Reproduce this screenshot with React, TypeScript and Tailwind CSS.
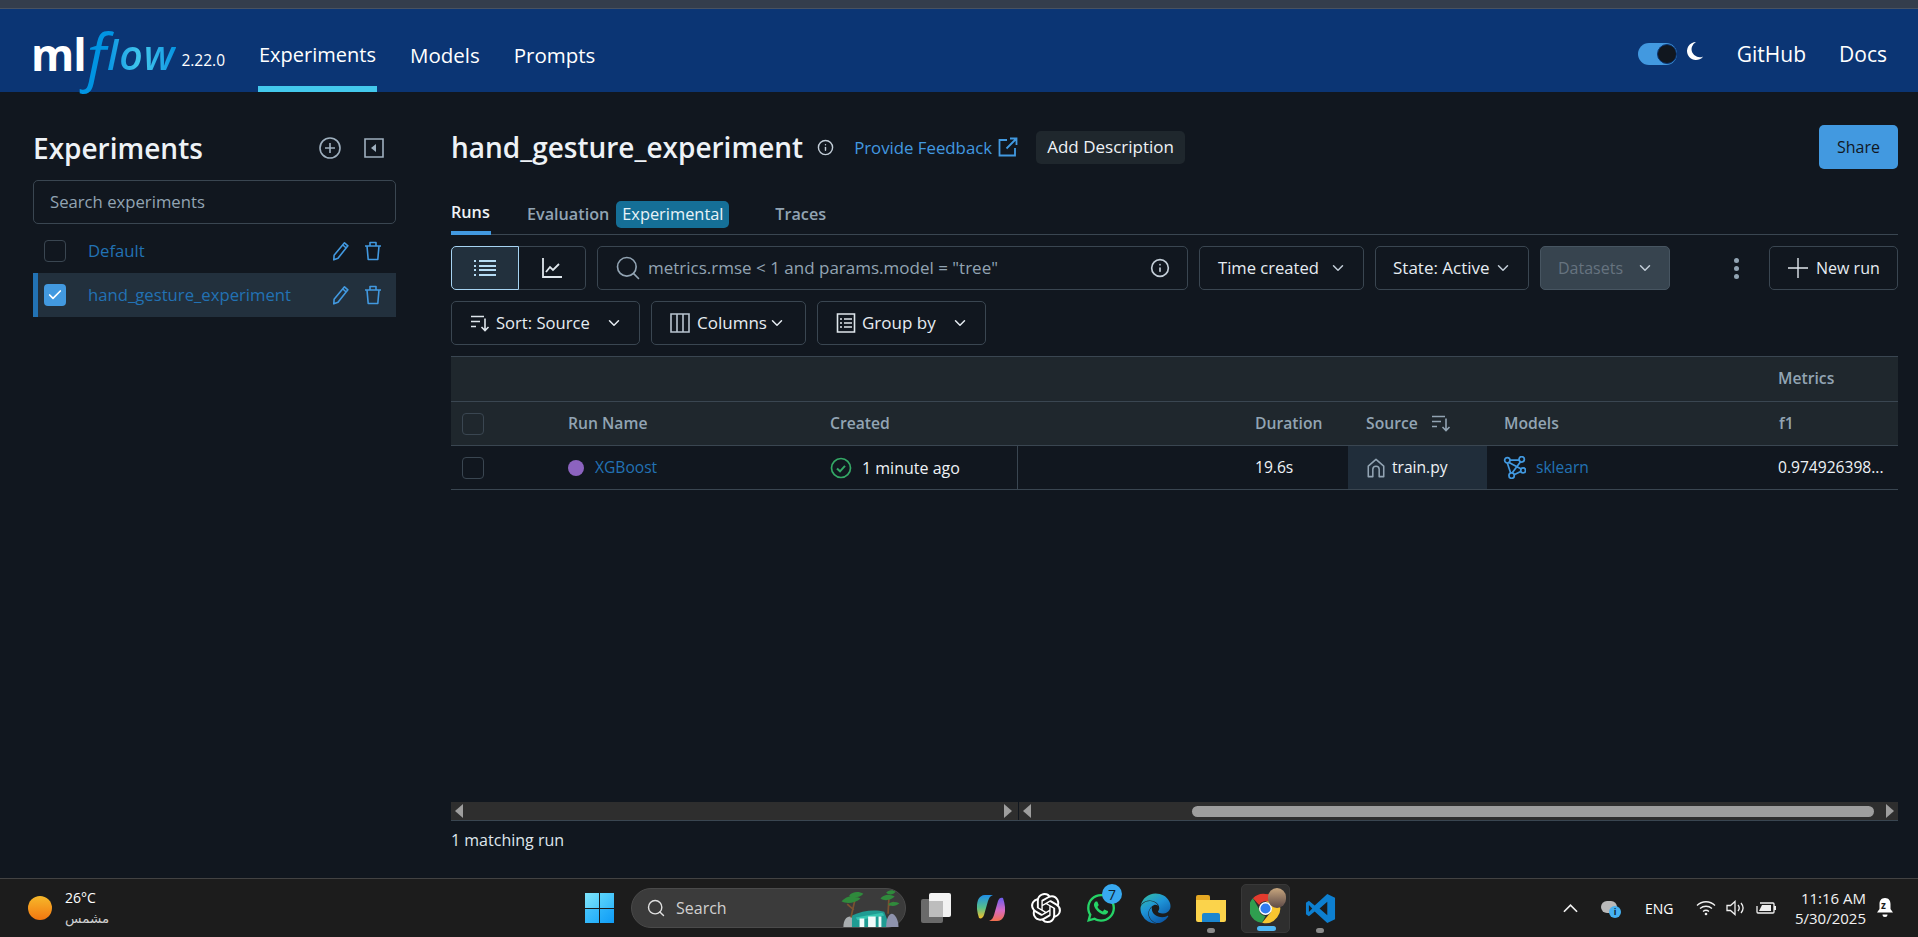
import { Check, ChevronDown, Info, Search } from 'lucide-react';
import { SiOpenai } from 'react-icons/si';
import { FaWhatsapp, FaEdge } from 'react-icons/fa';

const tableCols = 'grid grid-cols-[117px_262px_188px_237px_93px_139px_275px_136px]';
const outlineBtn = 'h-[44px] flex items-center border border-[#3a4651] rounded-[5px] text-[#e6ecf2]';

const SortIcon = ({ className }: { className?: string }) => (
    <svg viewBox="0 0 20 20" className={className} fill="none" stroke="currentColor" strokeWidth="1.6">
        <path d="M1 3.5h13M1 8.5h9M1 13.5h5M15 5.5v12M11.5 14l3.5 3.5 3.5-3.5" />
    </svg>
);

const PencilIcon = () => (
    <svg viewBox="0 0 18 20" className="w-[18px] h-[20px] text-[#4299e0]" fill="none" stroke="currentColor" strokeWidth="1.6" strokeLinejoin="round">
        <path d="M12.5 1.8l3.4 3L6 17.2l-4.2 1.6.3-4.5zM10.8 4l3.4 3" />
    </svg>
);

const TrashIcon = () => (
    <svg viewBox="0 0 18 20" className="w-[18px] h-[20px] text-[#4299e0]" fill="none" stroke="currentColor" strokeWidth="1.6" strokeLinejoin="round">
        <path d="M1 5h16M6 5V1.5h6V5M3 5l1.2 13.5h9.6L15 5" />
    </svg>
);

const Toggle = () => (
    <div className="w-[39px] h-[22px] rounded-full bg-[#4299e0] flex items-center justify-end">
        <div className="w-[20px] h-[20px] rounded-full bg-[#11171f] border border-[#0b3574]" />
    </div>
);

const Logo = () => (
    <div className="flex items-end w-[192px] h-[60px]">
        <span className="text-white text-[44px] font-bold leading-[50px] tracking-[-1px] mb-[1px] ml-[-2px]">ml</span>
        <span className="text-[#0194e2] text-[62px] font-medium italic leading-[60px] ml-[1px] mb-[-5px]">f</span>
        <span className="italic font-semibold text-[41px] leading-[50px] tracking-[1px] mb-[1px] ml-[1px] bg-gradient-to-r from-[#0194e2] via-[#43c9ed] to-[#0194e2] bg-clip-text text-transparent">low</span>
        <span className="text-white text-[15.5px] ml-auto mb-[8px]">2.22.0</span>
    </div>
);

const Header = () => (
    <div className="h-[83px] bg-[#0b3574] flex pl-[33px] pr-[31px] text-white text-[20px]">
        <div className="mt-[11px]"><Logo /></div>
        <div className="flex ml-[33px]">
            <div className="h-[83px] flex items-center border-b-[6px] border-[#43c9ed] pt-[14px] px-[1px]">Experiments</div>
            <div className="h-[83px] flex items-center pt-[9px] ml-[33px] text-[20.5px]">Models</div>
            <div className="h-[83px] flex items-center pt-[9px] ml-[34px] text-[20.5px]">Prompts</div>
        </div>
        <div className="flex items-center ml-auto pt-[8px] text-[21px]">
            <div className="mb-[2px]"><Toggle /></div>
            <svg viewBox="0 0 20 20" className="w-[18px] h-[20px] ml-[10px] mb-[7px] text-white" fill="currentColor">
                <path d="M10 0a10 10 0 1 0 8 16A8.5 8.5 0 0 1 10 0z" />
            </svg>
            <span className="ml-[32px]">GitHub</span>
            <span className="ml-[33px]">Docs</span>
        </div>
    </div>
);

const ExperimentRow = ({ name, active }: { name: string; active?: boolean }) => (
    <div className={`h-[44px] flex items-center ${active ? 'bg-[#22303d] border-l-[5px] border-[#2272b4] pl-[6px]' : 'pl-[11px]'}`}>
        {active ? (
            <div className="w-[22px] h-[22px] rounded-[4px] bg-[#4299e0] flex items-center justify-center">
                <Check size={16} strokeWidth={2.5} className="text-white" />
            </div>
        ) : (
            <div className="w-[22px] h-[22px] rounded-[4px] border border-[#3a4651]" />
        )}
        <span className="ml-[22px] text-[16.7px] text-[#2272b4]">{name}</span>
        <div className="ml-auto flex items-center gap-[14px] pr-[14px]">
            <PencilIcon />
            <TrashIcon />
        </div>
    </div>
);

const Sidebar = () => (
    <div className="w-[363px] ml-[33px] pt-[38px]">
        <div className="h-[36px] flex items-center text-[28px] font-semibold text-[#eef2f6]">
            Experiments
            <svg viewBox="0 0 22 22" className="w-[22px] h-[22px] ml-auto text-[#9fb0bf]" fill="none" stroke="currentColor" strokeWidth="1.6">
                <circle cx="11" cy="11" r="10" />
                <path d="M11 6v10M6 11h10" />
            </svg>
            <svg viewBox="0 0 20 20" className="w-[20px] h-[20px] ml-[23px] mr-[12px] text-[#9fb0bf]" fill="none" stroke="currentColor" strokeWidth="1.6">
                <path d="M1 1h18v18H1z" />
                <path d="M12 6v8l-5-4z" fill="currentColor" stroke="none" />
            </svg>
        </div>
        <div className="mt-[14px] h-[44px] border border-[#3a4651] rounded-[5px] flex items-center pl-[16px] text-[16.7px] text-[#92a4b3]">
            Search experiments
        </div>
        <div className="mt-[5px]">
            <ExperimentRow name="Default" />
            <ExperimentRow name="hand_gesture_experiment" active />
        </div>
    </div>
);

const TitleRow = () => (
    <div className="h-[44px] flex items-center">
        <span className="text-[28px] font-semibold text-[#eef2f6]">hand_gesture_experiment</span>
        <Info size={17} className="ml-[14px] text-[#c3ced8]" />
        <span className="ml-[20px] pt-[1px] text-[16.8px] text-[#4299e0]">Provide Feedback</span>
        <svg viewBox="0 0 20 20" className="w-[20px] h-[20px] ml-[6px] text-[#4299e0]" fill="none" stroke="currentColor" strokeWidth="1.8">
            <path d="M9 3H1.5v15.5H17V11M12 1.5h6.5V8M18.5 1.5L8.5 11.5" />
        </svg>
        <div className="ml-[18px] h-[33px] w-[149px] bg-[#1f272d] rounded-[5px] flex items-center justify-center text-[17px] text-[#eef2f6]">Add Description</div>
        <div className="ml-auto w-[79px] h-[44px] bg-[#4299e0] rounded-[5px] flex items-center justify-center text-[16px] text-[#11171f]">Share</div>
    </div>
);

const Tabs = () => (
    <div className="mt-[24px] h-[42px] border-b border-[#3a4651] flex items-center text-[16.2px] font-semibold text-[#92a4b3]">
        <div className="h-[42px] w-[40px] flex items-center border-b-[4px] border-[#4299e0] pt-[2px] text-[#eef2f6]">Runs</div>
        <span className="ml-[36px] mt-[1px]">Evaluation</span>
        <span className="ml-[7px] mt-[1px] w-[113px] h-[27px] rounded-[5px] bg-[#156f97] flex items-center justify-center font-normal text-[16.4px] text-[#e8f3f8]">Experimental</span>
        <span className="ml-[46px] mt-[1px]">Traces</span>
    </div>
);

const Toolbar = () => (
    <div className="mt-[11px] flex text-[16px]">
        <div className="flex w-[135px] h-[44px]">
            <div className="w-[68px] bg-[#22303d] border border-[#a6d3f2] rounded-l-[5px] flex items-center justify-center">
                <svg viewBox="0 0 22 18" className="w-[22px] h-[18px] text-[#b5dcf5]" fill="none" stroke="currentColor" strokeWidth="2">
                    <path d="M5 2h17M5 7h17M5 11h17M5 16h17M0 2h2M0 7h2M0 11h2M0 16h2" />
                </svg>
            </div>
            <div className="w-[67px] border border-l-0 border-[#3a4651] rounded-r-[5px] flex items-center justify-center">
                <svg viewBox="0 0 20 20" className="w-[20px] h-[20px] text-[#dfe6ec]" fill="none" stroke="currentColor" strokeWidth="1.8">
                    <path d="M1 0v19h19M4 14l4-5 3 3 6-6" />
                </svg>
            </div>
        </div>
        <div className={`${outlineBtn} ml-[11px] w-[591px] pl-[16px] pr-[17px]`}>
            <Search size={28} strokeWidth={1.4} className="text-[#92a4b3]" />
            <span className="ml-[6px] text-[17px] text-[#92a4b3]">metrics.rmse &lt; 1 and params.model = "tree"</span>
            <Info size={20} className="ml-auto text-[#c3ced8]" />
        </div>
        <div className={`${outlineBtn} ml-[11px] w-[165px] pl-[18px] text-[16.6px]`}>
            Time created
            <ChevronDown size={18} strokeWidth={2} className="ml-auto mr-[16px] text-[#c3ced8]" />
        </div>
        <div className={`${outlineBtn} ml-[11px] w-[154px] pl-[17px] text-[17px]`}>
            State: Active
            <ChevronDown size={18} strokeWidth={2} className="ml-auto mr-[16px] text-[#c3ced8]" />
        </div>
        <div className="ml-[11px] w-[130px] h-[44px] flex items-center pl-[17px] bg-[#37444f] border border-[#475561] rounded-[5px] text-[#66737f]">
            Datasets
            <ChevronDown size={18} strokeWidth={2} className="ml-auto mr-[15px] text-[#c3ced8]" />
        </div>
        <div className="ml-[64px] w-[5px] flex flex-col items-center justify-center gap-[3px]">
            <div className="w-[5px] h-[5px] rounded-full bg-[#92a4b3]" />
            <div className="w-[5px] h-[5px] rounded-full bg-[#92a4b3]" />
            <div className="w-[5px] h-[5px] rounded-full bg-[#92a4b3]" />
        </div>
        <div className={`${outlineBtn} ml-[30px] w-[129px] pl-[18px]`}>
            <svg viewBox="0 0 20 20" className="w-[20px] h-[20px] text-[#dfe6ec]" fill="none" stroke="currentColor" strokeWidth="1.4">
                <path d="M10 0v20M0 10h20" />
            </svg>
            <span className="ml-[8px]">New run</span>
        </div>
    </div>
);

const Controls = () => (
    <div className="mt-[11px] flex gap-[11px] text-[17px]">
        <div className={`${outlineBtn} w-[189px] pl-[18px]`}>
            <SortIcon className="w-[20px] h-[20px] text-[#dfe6ec]" />
            <span className="ml-[6px] text-[16.6px]">Sort: Source</span>
            <ChevronDown size={18} strokeWidth={2} className="ml-auto mr-[16px]" />
        </div>
        <div className={`${outlineBtn} w-[155px] pl-[18px]`}>
            <svg viewBox="0 0 20 20" className="w-[20px] h-[20px] text-[#b8c4cf]" fill="none" stroke="currentColor" strokeWidth="1.6">
                <path d="M1 1h18v18H1zM7 1v18M13 1v18" />
            </svg>
            <span className="ml-[7px]">Columns</span>
            <ChevronDown size={18} strokeWidth={2} className="ml-[1px]" />
        </div>
        <div className={`${outlineBtn} w-[169px] pl-[18px]`}>
            <svg viewBox="0 0 20 20" className="w-[20px] h-[20px] text-[#dfe6ec]" fill="none" stroke="currentColor" strokeWidth="1.6">
                <path d="M1.5 1h17v18h-17zM4 6h2M8 6h8M4 10h2M8 10h8M4 14h2M8 14h8" />
            </svg>
            <span className="ml-[6px]">Group by</span>
            <ChevronDown size={18} strokeWidth={2} className="ml-auto mr-[16px]" />
        </div>
    </div>
);

const ScrollArrow = ({ dir }: { dir: 'left' | 'right' }) => (
    <svg viewBox="0 0 10 14" className="w-[10px] h-[14px] text-[#9e9e9e]" fill="currentColor">
        <path d={dir === 'left' ? 'M9 0v14L1 7z' : 'M1 0v14l8-7z'} />
    </svg>
);

const RunsTable = () => (
    <div className="mt-[11px] h-[465px] flex flex-col">
        <div className="bg-[#1f272d] border-y border-[#3a4651] text-[15.7px] font-semibold text-[#92a4b3]">
            <div className="h-[45px] border-b border-[#3a4651] flex items-center justify-end">
                <span className="w-[120px]">Metrics</span>
            </div>
            <div className={`${tableCols} h-[43px] items-center`}>
                <div className="pl-[11px]"><div className="w-[22px] h-[22px] rounded-[4px] border border-[#3a4651]" /></div>
                <span>Run Name</span>
                <span>Created</span>
                <span />
                <span>Duration</span>
                <div className="flex items-center pl-[18px]">
                    Source
                    <SortIcon className="w-[20px] h-[20px] ml-[13px] text-[#92a4b3]" />
                </div>
                <span className="pl-[17px]">Models</span>
                <span className="pl-[17px]">f1</span>
            </div>
        </div>
        <div className={`${tableCols} h-[44px] border-b border-[#3a4651] text-[15.6px] text-[#eef2f6]`}>
            <div className="pl-[11px] flex items-center"><div className="w-[22px] h-[22px] rounded-[4px] border border-[#3a4651]" /></div>
            <div className="flex items-center">
                <div className="w-[16px] h-[16px] rounded-full bg-[#8c63bf]" />
                <span className="ml-[11px] text-[#2272b4]">XGBoost</span>
            </div>
            <div className="flex items-center border-r border-[#3a4651]">
                <svg viewBox="0 0 22 22" className="w-[22px] h-[22px] text-[#34a866]" fill="none" stroke="currentColor" strokeWidth="1.7">
                    <circle cx="11" cy="11" r="9.5" />
                    <path d="M7 11.5l3 2.8 5-5.5" strokeWidth="2" />
                </svg>
                <span className="ml-[10px] text-[16px]">1 minute ago</span>
            </div>
            <span />
            <span className="flex items-center">19.6s</span>
            <div className="flex items-center bg-[#202d3a] pl-[18px]">
                <svg viewBox="0 0 20 22" className="w-[20px] h-[20px] text-[#92a4b3]" fill="none" stroke="currentColor" strokeWidth="1.7">
                    <path d="M1.5 20.5V9L10 1.5 18.5 9v11.5h-5V12.500a3.5 3.5 0 0 0-7 0v8z" strokeLinejoin="round" />
                </svg>
                <span className="ml-[6px]">train.py</span>
            </div>
            <div className="flex items-center pl-[16px]">
                <svg viewBox="0 0 24 24" className="w-[23px] h-[23px] text-[#4299e0]" fill="none" stroke="currentColor" strokeWidth="1.8">
                    <circle cx="4.5" cy="4.5" r="2.8" />
                    <circle cx="19.5" cy="3.5" r="2.8" />
                    <circle cx="21" cy="15" r="2.5" />
                    <circle cx="9" cy="20.5" r="2.8" />
                    <path d="M7 4.2h9.8M6.3 6.7L19 13.5M18.3 6l-9 12M4.5 7.3L8 17.8M11.5 19.5l7.500-3.500" />
                </svg>
                <span className="ml-[10px] text-[#2272b4]">sklearn</span>
            </div>
            <span className="pl-[16px] flex items-center">0.974926398...</span>
        </div>
        <div className="flex-1" />
        <div className="h-[19px] flex border-b border-[#3a4651]">
            <div className="w-[567px] bg-[#2e2e2e] flex items-center justify-between pl-[3px] pr-[5px]">
                <ScrollArrow dir="left" />
                <ScrollArrow dir="right" />
            </div>
            <div className="ml-[1px] flex-1 bg-[#2e2e2e] flex items-center px-[3px]">
                <ScrollArrow dir="left" />
                <div className="ml-[160px] w-[682px] h-[11px] rounded-full bg-[#9e9e9e]" />
                <div className="ml-auto"><ScrollArrow dir="right" /></div>
            </div>
        </div>
    </div>
);

const Chrome = () => (
    <svg viewBox="0 0 32 32" className="w-[31px] h-[31px]">
        <path d="M16 1a15 15 0 0 1 13 7.5H16a7.5 7.5 0 0 0-6.500 3.800L3 5.500A15 15 0 0 1 16 1z" fill="#e33b2e" />
        <path d="M3 5.500l6.500 11.300a7.500 7.500 0 0 0 6.500 7L12.500 30.700A15 15 0 0 1 3 5.500z" fill="#2f9e4f" />
        <path d="M29 8.500A15 15 0 0 1 12.500 30.700l6.500-8a7.500 7.500 0 0 0 1.500-10.500 7 7 0 0 0-4.500-3.700z" fill="#f8c630" />
        <circle cx="16" cy="16" r="6" fill="#2f7cf0" stroke="#fff" strokeWidth="1.5" />
    </svg>
);

const SearchScene = () => (
    <svg viewBox="0 0 62 40" className="ml-auto mr-[4px] w-[62px] h-[38px]">
        <path d="M3 40c0-7 3-11 7-11s6 5 6 11z" fill="#a9aeb0" />
        <path d="M12 40V28c10-5 24-7 34-4l6 16z" fill="#1f9c93" />
        <path d="M16 30l28-5 2 3-28 5z" fill="#35c4b0" />
        <path d="M20 40V31h5v9zM29 40V29h8v11zM40 40V29h3v11z" fill="#f0fbfb" />
        <path d="M11 30L15 12M14 22l-7-6M50 26l1-18M50 18l6-4" stroke="#7a5230" strokeWidth="1.8" fill="none" />
        <path d="M1 13c5-6 13-7 20-3-5 5-15 6-20 3zM9 7c3-4 10-5 15-2-3 4-11 5-15 2z" fill="#2f8a3c" />
        <path d="M42 10c4-5 10-5 15-2-4 4-11 5-15 2zM48 4c2-3 7-4 10-1-2 3-7 4-10 1zM50 16c3-3 8-3 12-1-3 3-9 4-12 1z" fill="#2f8a3c" />
        <path d="M48 40c0-9 3-14 6-14s7 6 7 14z" fill="#8e93ad" />
    </svg>
);

const Taskbar = () => (
    <div className="h-[59px] bg-[#1c1c1c] border-t border-[#434343] flex items-center text-white relative">
        <svg width="0" height="0" className="absolute">
            <defs>
                <linearGradient id="edgeGrad" x1="0" y1="0" x2="0.6" y2="1">
                    <stop offset="0" stopColor="#35c1a0" />
                    <stop offset="0.5" stopColor="#1e94d8" />
                    <stop offset="1" stopColor="#0c5aa8" />
                </linearGradient>
            </defs>
        </svg>
        <div className="w-[585px] flex items-center pl-[28px] shrink-0">
            <div className="w-[24px] h-[24px] rounded-full bg-gradient-to-b from-[#f5b82a] to-[#f2760f]" />
            <div className="ml-[13px] text-[14px] leading-[21px]">
                <div>26°C</div>
                <div className="font-['DejaVu_Sans',sans-serif] text-[13.5px] text-[#cfcfcf]">مشمس</div>
            </div>
        </div>
        <div className="grid grid-cols-2 gap-[1px] w-[29px] h-[30px] shrink-0">
            <div className="bg-gradient-to-br from-[#7de4fc] to-[#4fcbfa]" />
            <div className="bg-gradient-to-br from-[#5ad4fb] to-[#33b9fa]" />
            <div className="bg-gradient-to-br from-[#43c3fb] to-[#22aefa]" />
            <div className="bg-gradient-to-br from-[#2bb4fa] to-[#0f9cf6]" />
        </div>
        <div className="ml-[17px] w-[275px] h-[40px] bg-[#3b3b3b] border border-[#4a4a4a] rounded-full flex items-center pl-[14px] shrink-0">
            <Search size={20} strokeWidth={1.7} className="text-[#e0e0e0]" />
            <span className="ml-[10px] text-[16px] text-[#d0d0d0]">Search</span>
            <SearchScene />
        </div>
        <div className="ml-[15px] relative w-[30px] h-[30px] shrink-0">
            <div className="absolute left-0 bottom-0 w-[22px] h-[24px] rounded-[2px] bg-[#6a6a6a]" />
            <div className="absolute right-0 top-0 w-[22px] h-[24px] rounded-[2px] bg-[#f2f2f2]" />
            <div className="absolute left-[8px] top-[8px] w-[14px] h-[16px] bg-[#bdbdbd]" />
        </div>
        <svg viewBox="0 0 28 26" className="ml-[26px] w-[28px] h-[26px] shrink-0">
            <defs>
                <linearGradient id="copA" x1="0" y1="0" x2="0" y2="1">
                    <stop offset="0" stopColor="#1f8fe8" />
                    <stop offset="0.55" stopColor="#58c08a" />
                    <stop offset="1" stopColor="#f5c02a" />
                </linearGradient>
                <linearGradient id="copB" x1="0" y1="0" x2="0" y2="1">
                    <stop offset="0" stopColor="#6a5cf0" />
                    <stop offset="0.55" stopColor="#d86bc0" />
                    <stop offset="1" stopColor="#f2704d" />
                </linearGradient>
            </defs>
            <path d="M8 0h8c-3 1-4 3-5 6L7 20c-1 3-3 4-5 3-2-6-3-12-1-18 1-3 4-5 7-5z" fill="url(#copA)" />
            <path d="M20 26h-8c3-1 4-3 5-6l4-14c1-3 3-4 5-3 2 6 3 12 1 18-1 3-4 5-7 5z" fill="url(#copB)" />
        </svg>
        <SiOpenai className="ml-[26px] w-[30px] h-[30px] shrink-0 text-white" />
        <div className="ml-[25px] relative shrink-0">
            <FaWhatsapp className="w-[30px] h-[32px] text-[#25d366]" />
            <div className="absolute left-[16px] top-[-8px] w-[20px] h-[20px] rounded-full bg-[#38a9f0] text-[#10222f] text-[14px] flex items-center justify-center">7</div>
        </div>
        <FaEdge fill="url(#edgeGrad)" className="ml-[24px] w-[31px] h-[31px] shrink-0" />
        <div className="ml-[25px] relative w-[30px] h-[27px] shrink-0 flex flex-col">
            <div className="w-[14px] h-[5px] bg-[#e5a823] rounded-t-[2px]" />
            <div className="flex-1 bg-[#fbd34b] rounded-b-[2px] flex items-end justify-center">
                <div className="w-[18px] h-[9px] bg-[#1a86d0] rounded-t-[2px]" />
            </div>
            <div className="absolute left-[11px] bottom-[-11px] w-[8px] h-[5px] rounded-full bg-[#8a8a8a]" />
        </div>
        <div className="ml-[15px] w-[49px] h-[49px] rounded-[5px] bg-[#2e2e2e] border border-[#383838] flex items-center justify-center relative shrink-0">
            <Chrome />
            <div className="absolute right-[3px] top-[3px] w-[18px] h-[20px] rounded-full bg-gradient-to-b from-[#c9a77e] to-[#5d4a47]" />
            <div className="absolute left-[15px] bottom-[1px] w-[19px] h-[5px] rounded-full bg-[#4fb8f5]" />
        </div>
        <div className="ml-[15px] relative shrink-0">
            <svg viewBox="0 0 32 32" className="w-[31px] h-[31px] text-[#0d7fd0]" fill="currentColor">
                <path fillRule="evenodd" d="M23 1l8 4v22l-8 4L10 19l-6 5-3-2v-12l3-2 6 5zM23 9l-8 7 8 7zM4 12.5v7l3.500-3.500z" />
            </svg>
            <div className="absolute left-[11px] bottom-[-9px] w-[8px] h-[5px] rounded-full bg-[#8a8a8a]" />
        </div>
        <div className="ml-auto flex items-center pr-[25px]">
            <svg viewBox="0 0 16 10" className="w-[15px] h-[10px] text-[#f0f0f0]" fill="none" stroke="currentColor" strokeWidth="1.8">
                <path d="M1 9l7-7 7 7" />
            </svg>
            <div className="ml-[23px] relative w-[20px] h-[16px]">
                <div className="absolute left-0 top-[1px] w-[16px] h-[12px] rounded-full bg-[#b9b9b9]" />
                <div className="absolute right-0 bottom-[-2px] w-[12px] h-[12px] rounded-full bg-[#45b1f2] text-[#10222f] text-[9px] font-bold leading-[12px] text-center">i</div>
            </div>
            <span className="ml-[24px] text-[14px] w-[28px]">ENG</span>
            <svg viewBox="0 0 20 16" className="ml-[23px] w-[20px] h-[16px]" fill="none" stroke="#f0f0f0" strokeWidth="1.3">
                <path d="M1 5.5c5-5 13-5 18 0M4 8.5c3.5-3 8.5-3 12 0M7 11.5c1.8-1.5 4.2-1.5 6 0" />
                <circle cx="10" cy="14" r="1.3" fill="#f0f0f0" stroke="none" />
            </svg>
            <svg viewBox="0 0 20 16" className="ml-[10px] w-[20px] h-[16px]" fill="none" stroke="#f0f0f0" strokeWidth="1.3">
                <path d="M1 5.5h3.500L9 1.500v13L4.500 10.500H1zM12 5c1.500 1.800 1.500 4.200 0 6M15 3c2.500 3 2.500 7 0 10" />
            </svg>
            <svg viewBox="0 0 20 16" className="ml-[10px] w-[20px] h-[16px]" fill="none" stroke="#f0f0f0" strokeWidth="1.3">
                <path d="M4 3h13a1 1 0 0 1 1 1v8a1 1 0 0 1-1 1H2a1 1 0 0 1-1-1V6" />
                <path d="M3 11h12V5H6z" fill="#f0f0f0" stroke="none" />
                <path d="M19 6v4" strokeWidth="2" />
            </svg>
            <div className="ml-[6px] w-[84px] text-right text-[15px] leading-[20px] text-[#f2f2f2]">
                <div>11:16 AM</div>
                <div>5/30/2025</div>
            </div>
            <div className="ml-[11px] relative w-[16px] h-[20px]">
                <svg viewBox="0 0 16 20" className="w-[16px] h-[20px] text-white" fill="currentColor">
                    <path d="M8 0c4 0 5.500 3 5.500 6v5l2.500 3.500H0L2.500 11V6C2.500 3 4 0 8 0zM5.500 16.500h5a2.500 2.500 0 0 1-5 0z" />
                </svg>
                <span className="absolute left-[4px] top-[2px] text-[10px] leading-[10px] font-bold text-[#1c1c1c]">z</span>
            </div>
        </div>
    </div>
);

export default function App() {
    return (
        <div className="w-[1918px] h-[937px] overflow-hidden flex flex-col bg-[#11171f] font-['Open_Sans',sans-serif]">
            <div className="h-[9px] bg-[#343d4c] border-b border-[#495261]" />
            <Header />
            <div className="flex-1 flex">
                <Sidebar />
                <div className="w-[1447px] ml-[55px] pt-[33px]">
                    <TitleRow />
                    <Tabs />
                    <Toolbar />
                    <Controls />
                    <RunsTable />
                    <div className="mt-[7px] text-[16px] text-[#dfe6ec]">1 matching run</div>
                </div>
            </div>
            <Taskbar />
        </div>
    );
}
